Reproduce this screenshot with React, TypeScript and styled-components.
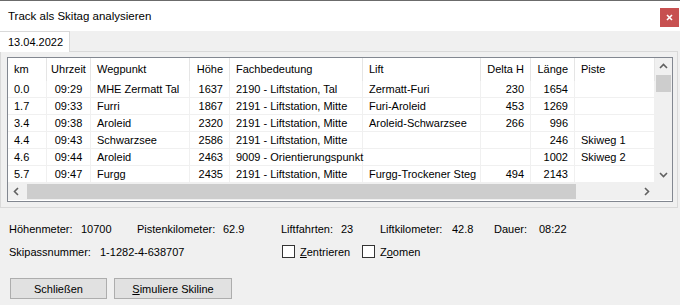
import React from 'react';
import styled, { createGlobalStyle } from 'styled-components';

interface Row {
    km: string;
    time: string;
    point: string;
    height: string;
    meaning: string;
    lift: string;
    delta: string;
    length: string;
    piste: string;
}

const rows: Row[] = [
    { km: '0.0', time: '09:29', point: 'MHE Zermatt Tal', height: '1637', meaning: '2190 - Liftstation, Tal', lift: 'Zermatt-Furi', delta: '230', length: '1654', piste: '' },
    { km: '1.7', time: '09:33', point: 'Furri', height: '1867', meaning: '2191 - Liftstation, Mitte', lift: 'Furi-Aroleid', delta: '453', length: '1269', piste: '' },
    { km: '3.4', time: '09:38', point: 'Aroleid', height: '2320', meaning: '2191 - Liftstation, Mitte', lift: 'Aroleid-Schwarzsee', delta: '266', length: '996', piste: '' },
    { km: '4.4', time: '09:43', point: 'Schwarzsee', height: '2586', meaning: '2191 - Liftstation, Mitte', lift: '', delta: '', length: '246', piste: 'Skiweg 1' },
    { km: '4.6', time: '09:44', point: 'Aroleid', height: '2463', meaning: '9009 - Orientierungspunkt', lift: '', delta: '', length: '1002', piste: 'Skiweg 2' },
    { km: '5.7', time: '09:47', point: 'Furgg', height: '2435', meaning: '2191 - Liftstation, Mitte', lift: 'Furgg-Trockener Steg', delta: '494', length: '2143', piste: '' },
];

type Align = 'left' | 'center' | 'right';

const columns: { title: string; key: keyof Row; align: Align }[] = [
    { title: 'km', key: 'km', align: 'left' },
    { title: 'Uhrzeit', key: 'time', align: 'center' },
    { title: 'Wegpunkt', key: 'point', align: 'left' },
    { title: 'Höhe', key: 'height', align: 'right' },
    { title: 'Fachbedeutung', key: 'meaning', align: 'left' },
    { title: 'Lift', key: 'lift', align: 'left' },
    { title: 'Delta H', key: 'delta', align: 'right' },
    { title: 'Länge', key: 'length', align: 'right' },
    { title: 'Piste', key: 'piste', align: 'left' },
];

function Chevron({ dir }: { dir: 'up' | 'down' | 'left' | 'right' }) {
    const points = {
        up: '1,6 4.5,2.5 8,6',
        down: '1,3 4.5,6.5 8,3',
        left: '6,1 2.5,4.5 6,8',
        right: '3,1 6.5,4.5 3,8',
    }[dir];
    return (
        <svg width="9" height="9" viewBox="0 0 9 9">
            <polyline points={points} fill="none" stroke="#606060" strokeWidth="1.6" />
        </svg>
    );
}

function App() {
    return (
        <>
            <GlobalStyle />
            <Window>
                <TitleBar>
                    <Title>Track als Skitag analysieren</Title>
                    <CloseButton>
                        <svg width="7" height="7" viewBox="0 0 7 7">
                            <path d="M1 1 L6 6 M6 1 L1 6" stroke="white" strokeWidth="1.6" />
                        </svg>
                    </CloseButton>
                </TitleBar>

                <TabStrip>
                    <Tab>13.04.2022</Tab>
                </TabStrip>
                <TabPanel>
                    <ListView>
                        <ListContent>
                            <Grid>
                                {columns.map((col) => (
                                    <HeaderCell key={col.key} $align={col.align}>
                                        {col.title}
                                    </HeaderCell>
                                ))}
                                {rows.map((row, i) =>
                                    columns.map((col) => (
                                        <Cell key={`${i}-${col.key}`} $align={col.align}>
                                            {row[col.key]}
                                        </Cell>
                                    ))
                                )}
                            </Grid>
                        </ListContent>
                        <VScroll>
                            <ArrowBox>
                                <Chevron dir="up" />
                            </ArrowBox>
                            <VTrack>
                                <VThumb />
                            </VTrack>
                            <ArrowBox>
                                <Chevron dir="down" />
                            </ArrowBox>
                        </VScroll>
                        <HScroll>
                            <ArrowBox>
                                <Chevron dir="left" />
                            </ArrowBox>
                            <HTrack>
                                <HThumb />
                            </HTrack>
                            <ArrowBox>
                                <Chevron dir="right" />
                            </ArrowBox>
                        </HScroll>
                        <Corner />
                    </ListView>
                </TabPanel>

                <Footer>
                    <InfoRow>
                        <Label $w={72}>Höhenmeter:</Label>
                        <Value $w={56}>10700</Value>
                        <Label $w={86}>Pistenkilometer:</Label>
                        <Value $w={58}>62.9</Value>
                        <Label $w={60}>Liftfahrten:</Label>
                        <Value $w={39}>23</Value>
                        <Label $w={72}>Liftkilometer:</Label>
                        <Value $w={42}>42.8</Value>
                        <Label $w={45}>Dauer:</Label>
                        <Value $w={50}>08:22</Value>
                    </InfoRow>
                    <InfoRow>
                        <Label $w={91}>Skipassnummer:</Label>
                        <Value $w={182}>1-1282-4-638707</Value>
                        <CheckItem $w={80}>
                            <Box />
                            <span>
                                <u>Z</u>entrieren
                            </span>
                        </CheckItem>
                        <CheckItem $w={80}>
                            <Box />
                            <span>
                                Z<u>o</u>omen
                            </span>
                        </CheckItem>
                    </InfoRow>
                    <ButtonRow>
                        <Button $w={97}>Schließen</Button>
                        <Button $w={118}>
                            <u>S</u>imuliere Skiline
                        </Button>
                    </ButtonRow>
                </Footer>
            </Window>
        </>
    );
}

export default App;

const GlobalStyle = createGlobalStyle`
    html, body {
        margin: 0;
        padding: 0;
        background: #f0f0f0;
    }
    body {
        font-family: "Liberation Sans", Arial, sans-serif;
        font-size: 11px;
        color: #000;
    }
`;

const Window = styled.div`
    width: 680px;
    height: 305px;
    background: #f0f0f0;
    border-top: 1px solid #6b6b6b;
    box-sizing: border-box;
    overflow: hidden;
`;

const TitleBar = styled.div`
    height: 30px;
    background: #fff;

    display: flex;
    align-items: flex-start;
    justify-content: space-between;
`;

const Title = styled.div`
    font-size: 11.5px;
    padding: 9px 0 0 8px;
`;

const CloseButton = styled.div`
    width: 19px;
    height: 19px;
    margin: 7px 1px 0 0;
    background: #c75050;

    display: flex;
    align-items: center;
    justify-content: center;
`;

const TabStrip = styled.div`
    height: 20px;
    display: flex;
    align-items: flex-end;
`;

const Tab = styled.div`
    width: 61px;
    height: 20px;
    padding-left: 8px;
    background: #fff;
    border-top: 1px solid #d9d9d9;
    border-right: 1px solid #d9d9d9;
    margin-bottom: -1px;
    position: relative;
    z-index: 1;

    display: flex;
    align-items: center;
`;

const TabPanel = styled.div`
    width: 678px;
    height: 157px;
    box-sizing: border-box;
    border: 1px solid #d9d9d9;
    padding: 5px 4px 5px 6px;
`;

const ListView = styled.div`
    width: 666px;
    height: 145px;
    box-sizing: border-box;
    border: 1px solid #828790;
    background: #fff;

    display: grid;
    grid-template-columns: 647px 17px;
    grid-template-rows: 125px 17px;
`;

const ListContent = styled.div`
    overflow: hidden;
`;

const Grid = styled.div`
    display: grid;
    grid-template-columns: 39px 44px 99px 40px 133px 118px 50px 44px 80px;
    grid-auto-rows: 17px;
    grid-template-rows: 23px;
`;

const HeaderCell = styled.div<{ $align: Align }>`
    border-right: 1px solid #e5e5e5;
    padding: 0 6px;
    display: flex;
    align-items: center;
    padding-bottom: 2px;
    justify-content: ${(p) => (p.$align === 'right' ? 'flex-end' : p.$align === 'center' ? 'center' : 'flex-start')};
    white-space: nowrap;
    overflow: hidden;
`;

const Cell = styled.div<{ $align: Align }>`
    border-right: 1px solid #f0f0f0;
    border-bottom: 1px solid #f0f0f0;
    padding: 0 6px;
    display: flex;
    align-items: center;
    justify-content: ${(p) => (p.$align === 'right' ? 'flex-end' : p.$align === 'center' ? 'center' : 'flex-start')};
    white-space: nowrap;
    min-width: 0;
`;

const VScroll = styled.div`
    background: #f0f0f0;
    display: flex;
    flex-direction: column;
`;

const HScroll = styled.div`
    background: #f0f0f0;
    display: flex;
`;

const ArrowBox = styled.div`
    width: 17px;
    height: 17px;
    flex: none;
    display: flex;
    align-items: center;
    justify-content: center;
`;

const VTrack = styled.div`
    flex: 1;
`;

const VThumb = styled.div`
    margin: 0 1px;
    height: 17px;
    background: #cdcdcd;
`;

const HTrack = styled.div`
    flex: 1;
    padding: 1px 0;
`;

const HThumb = styled.div`
    width: 549px;
    height: 15px;
    margin-left: 2px;
    background: #cdcdcd;
`;

const Corner = styled.div`
    background: #f0f0f0;
`;

const Footer = styled.div`
    padding: 9px 0 0 9px;
`;

const InfoRow = styled.div`
    height: 23px;
    display: flex;
    align-items: center;
    white-space: nowrap;
`;

const Label = styled.div<{ $w: number }>`
    width: ${(p) => p.$w}px;
    flex: none;
`;

const Value = styled.div<{ $w: number }>`
    width: ${(p) => p.$w}px;
    flex: none;
`;

const CheckItem = styled.label<{ $w: number }>`
    width: ${(p) => p.$w}px;
    flex: none;
    display: flex;
    align-items: center;
    gap: 5px;
`;

const Box = styled.span`
    width: 11px;
    height: 11px;
    border: 1px solid #333;
    background: #fff;
    display: inline-block;
`;

const ButtonRow = styled.div`
    margin-top: 15px;
    display: flex;
    gap: 7px;
    padding-left: 1px;
`;

const Button = styled.div<{ $w: number }>`
    width: ${(p) => p.$w}px;
    height: 21px;
    box-sizing: border-box;
    border: 1px solid #adadad;
    background: #e1e1e1;

    display: flex;
    align-items: center;
    justify-content: center;
`;
